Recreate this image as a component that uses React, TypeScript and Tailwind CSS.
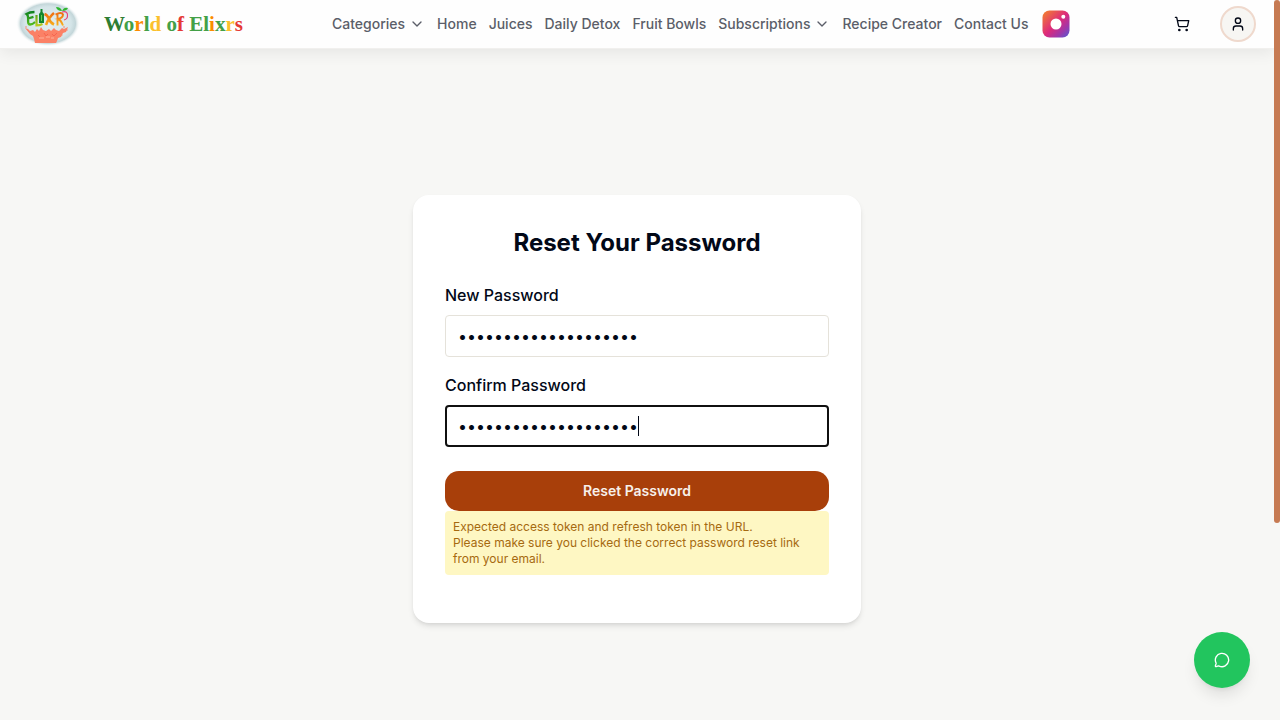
import { useState } from "react";
import { ChevronDown, MessageCircle, ShoppingCart, User } from "lucide-react";

const brandLetters = [
  { text: "W", color: "text-[#2e7d32]" },
  { text: "o", color: "text-[#43a047]" },
  { text: "r", color: "text-[#fb8c00]" },
  { text: "l", color: "text-[#43a047]" },
  { text: "d", color: "text-[#fbc02d]" },
  { text: " ", color: "" },
  { text: "o", color: "text-[#43a047]" },
  { text: "f", color: "text-[#e53935]" },
  { text: " ", color: "" },
  { text: "E", color: "text-[#43a047]" },
  { text: "l", color: "text-[#43a047]" },
  { text: "i", color: "text-[#fb8c00]" },
  { text: "x", color: "text-[#43a047]" },
  { text: "r", color: "text-[#fbc02d]" },
  { text: "s", color: "text-[#e53935]" },
];

const navItems = [
  { label: "Categories", menu: true },
  { label: "Home" },
  { label: "Juices" },
  { label: "Daily Detox" },
  { label: "Fruit Bowls" },
  { label: "Subscriptions", menu: true },
  { label: "Recipe Creator" },
  { label: "Contact Us" },
];

function Logo() {
  return (
    <svg viewBox="0 0 64 48" className="h-12 w-16" aria-label="Elixr" role="img">
      <defs>
        <radialGradient id="oval">
          <stop offset="0" stopColor="#e2eef0" />
          <stop offset="0.72" stopColor="#d5e5e8" />
          <stop offset="0.86" stopColor="#c3d6d9" />
          <stop offset="1" stopColor="#ffffff" stopOpacity="0" />
        </radialGradient>
        <linearGradient id="leaf" gradientUnits="userSpaceOnUse" x1="0" y1="10" x2="0" y2="27">
          <stop offset="0" stopColor="#077a20" />
          <stop offset="1" stopColor="#5cc41c" />
        </linearGradient>
        <linearGradient id="lime" gradientUnits="userSpaceOnUse" x1="0" y1="13" x2="0" y2="27">
          <stop offset="0" stopColor="#4f9f1c" />
          <stop offset="1" stopColor="#c5d020" />
        </linearGradient>
        <linearGradient id="citrus" gradientUnits="userSpaceOnUse" x1="0" y1="12" x2="0" y2="26">
          <stop offset="0" stopColor="#ee6a10" />
          <stop offset="1" stopColor="#f9b31c" />
        </linearGradient>
      </defs>
      <ellipse cx="32" cy="23.5" rx="32" ry="23" fill="url(#oval)" />
      <path
        d="M9 28l3 1 2 2 3-1 2 2 2-3 2 2 2-4 2 3 3 1 3-2 2 2 3-3 2 2 3 1 3-3 2 1 4-2-2 5-3 1-2 4-3 1-1 3-1 2H19l-1-4-1-3-3-2z"
        fill="#fb8166"
      />
      <path d="M22 35l2 2M28 33l2 3 2-2M36 34l2 2 3-3" fill="none" stroke="#f4604a" strokeWidth="0.800" />
      <path d="M23 38h5M30 37h4M35 38h3" stroke="#ffc4b2" strokeWidth="0.700" />
      <g fill="#fb8166">
        <circle cx="10" cy="27" r="0.800" />
        <circle cx="48" cy="27" r="0.800" />
        <circle cx="51" cy="30" r="0.700" />
        <circle cx="46" cy="35" r="0.600" />
      </g>
      <path
        d="M18.500 12q-5 0-8 2 1.600 1 1.600 4.500v3q0 3 2 3 2.400 0 5-2.500M12 18.500l5.500-1.700"
        fill="none"
        stroke="url(#leaf)"
        strokeWidth="2.300"
      />
      <path d="M20.500 15v10.500q3 0 6-1.500" fill="none" stroke="url(#lime)" strokeWidth="2.200" />
      <path d="M23 14l1.500-2V9h2v3l1.500 2v9h-5z" fill="#12852f" />
      <path d="M25.500 15v6" stroke="#69ce50" strokeWidth="1" />
      <path d="M28.500 14q3 1 4.500 5t5 5.500M38 13q-5 4-8 12" fill="none" stroke="url(#citrus)" strokeWidth="2.500" />
      <path
        d="M39.500 14.500q6-3 7.500 0 0 3.500-5 4.500 3 1 5 6.500M41.500 14v11.500"
        fill="none"
        stroke="url(#citrus)"
        strokeWidth="1.900"
      />
      <path d="M46 12q6-1.500 5.500 4 0 3-3.500 4" fill="none" stroke="#e8447a" strokeWidth="1.200" />
      <path d="M46 11q-1-4-6-4 1 4 6 4zM46 11q2-4.500 6-3-1 3-6 3z" fill="#2fb52f" />
    </svg>
  );
}

function InstagramIcon() {
  return (
    <svg viewBox="0 0 28 28" className="size-7">
      <defs>
        <linearGradient id="insta" x1="0" y1="0" x2="1" y2="1">
          <stop offset="0" stopColor="#f58529" />
          <stop offset="0.5" stopColor="#dd2a7b" />
          <stop offset="0.75" stopColor="#a136a8" />
          <stop offset="1" stopColor="#515bd4" />
        </linearGradient>
      </defs>
      <rect x="0.500" y="0.500" width="27" height="27" rx="7" fill="url(#insta)" />
      <circle cx="14" cy="14" r="5.500" fill="#fff" />
      <circle cx="21.300" cy="6.700" r="2" fill="#fff" />
    </svg>
  );
}

function Header() {
  return (
    <header className="flex h-[49px] items-center border-b border-[#f1f0ee] bg-[#fefefe] pr-[18px] pl-4 shadow-[0_4px_16px_rgba(0,0,0,0.07)]">
      <a href="#home" className="flex w-79 shrink-0 items-center gap-6">
        <Logo />
        <span className="pt-0.5 font-['Liberation_Serif',serif] text-[21px] font-bold whitespace-pre">
          {brandLetters.map((letter, i) => (
            <span key={i} className={letter.color}>
              {letter.text}
            </span>
          ))}
        </span>
      </a>
      <nav className="flex items-center gap-3 text-sm font-medium whitespace-nowrap text-[#5b5e69]">
        {navItems.map((item) =>
          item.menu ? (
            <button key={item.label} type="button" className="flex items-center gap-1">
              {item.label}
              <ChevronDown className="size-4" />
            </button>
          ) : (
            <a key={item.label} href="#page">
              {item.label}
            </a>
          ),
        )}
        <a href="#instagram" aria-label="Instagram" className="ml-0.5">
          <InstagramIcon />
        </a>
      </nav>
      <div className="ml-auto flex items-center gap-[30px] text-[#020817]">
        <button type="button" aria-label="Cart">
          <ShoppingCart className="size-4" />
        </button>
        <button
          type="button"
          aria-label="Account"
          className="flex size-9 items-center justify-center rounded-full border-2 border-[#efd9cd] bg-[#f7f6f3]"
        >
          <User className="size-4" />
        </button>
      </div>
    </header>
  );
}

export default function App() {
  const [password, setPassword] = useState("correct-horse-batter");
  const [confirm, setConfirm] = useState("correct-horse-batter");

  return (
    <div className="flex min-h-screen bg-[#f7f7f5] font-['Inter',sans-serif] text-[#020817]">
      <div className="flex min-w-0 flex-1 flex-col">
        <Header />
        <main className="flex flex-1 items-center justify-center pt-[49px]">
          <form
            className="w-full max-w-md rounded-2xl bg-white p-8 shadow-md"
            onSubmit={(e) => e.preventDefault()}
          >
            <h1 className="mb-6 text-center text-2xl font-bold">Reset Your Password</h1>
            <div className="mb-4">
              <label htmlFor="new-password" className="mb-2 block font-medium">
                New Password
              </label>
              <input
                id="new-password"
                type="password"
                value={password}
                onChange={(e) => setPassword(e.target.value)}
                className="h-[42px] w-full rounded-sm border border-[#e5e2da] bg-white px-3"
              />
            </div>
            <div className="mb-6">
              <label htmlFor="confirm-password" className="mb-2 block font-medium">
                Confirm Password
              </label>
              <div className="relative">
                <input
                  id="confirm-password"
                  type="password"
                  autoFocus
                  value={confirm}
                  onChange={(e) => setConfirm(e.target.value)}
                  className="block h-[42px] w-full rounded-sm border-2 border-[#101010] bg-white px-[11px] caret-transparent outline-none"
                />
                <span
                  className="pointer-events-none absolute top-[11px] left-[193px] h-5 w-px bg-[#020817]"
                  aria-hidden="true"
                />
              </div>
            </div>
            <button
              type="submit"
              className="h-10 w-full rounded-[14px] bg-[#a83f0a] text-sm font-semibold text-[#f7f0ea]"
            >
              Reset Password
            </button>
            <p className="mb-4 rounded-sm bg-[#fef7c3] p-2 text-xs text-[#a66a10]">
              Expected access token and refresh token in the URL.
              <br />
              Please make sure you clicked the correct password reset link from your email.
            </p>
          </form>
        </main>
      </div>
      <div className="w-[6px] shrink-0 bg-[#f7f7f5]" aria-hidden="true">
        <div className="h-[523px] rounded-full bg-[#c67a52]" />
      </div>
      <button
        type="button"
        aria-label="Chat with us"
        className="fixed right-[30px] bottom-8 flex size-14 items-center justify-center rounded-full bg-[#22c55e] text-white shadow-lg"
      >
        <MessageCircle className="size-4" />
      </button>
    </div>
  );
}
